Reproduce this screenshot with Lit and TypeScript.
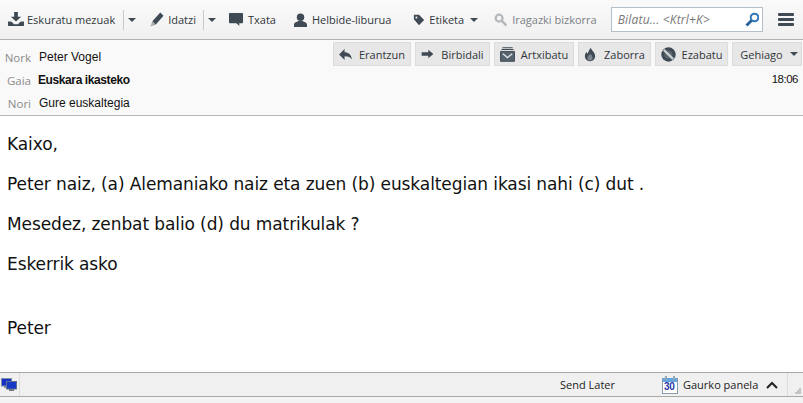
import { LitElement, html, css, svg } from "lit";
import { customElement } from "lit/decorators.js";

const ic = (w: number, h: number, body: unknown, vb = `0 0 ${w} ${h}`) =>
  html`<svg class="ic" width=${w} height=${h} viewBox=${vb}>${body}</svg>`;
const D = "#3f4a54";

const icons = {
  get: ic(16, 15, svg`<path d="M6.500 0h4v5h3.500L8.500 10 3 5h3.500z" fill="${D}"/><path d="M0 10h3.500l3 3h4l3-3H17v5H0z" fill="${D}"/>`, "0 0 17 16"),
  pen: ic(14, 15, svg`<path d="M11 .5l3.500 3.500L6 13.500 2.500 10z" fill="${D}"/><path d="M2.500 10l3.500 3.500L.5 15.500z" fill="#a4abb0"/>`, "0 0 15 16"),
  chat: ic(16, 15, svg`<path d="M2 1h13a1 1 0 0 1 1 1v9a1 1 0 0 1-1 1h-3v3l-3-3H2a1 1 0 0 1-1-1V2a1 1 0 0 1 1-1z" fill="${D}"/>`, "0 0 17 16"),
  person: ic(13, 14, svg`<circle cx="7" cy="4.500" r="4" fill="${D}"/><path d="M0 15v-2.500C0 10 3 9.500 5 8.500h4c2 1 5 1.500 5 4V15z" fill="${D}"/>`, "0 0 14 15"),
  tag: ic(12, 12, svg`<path d="M1 1h6l6 6-6 6-6-7z" fill="${D}"/><circle cx="4" cy="4" r="1.200" fill="#f3f3f3"/>`, "0 0 14 14"),
  lens: ic(13, 14, svg`<circle cx="5.500" cy="5.500" r="3.700" fill="none" stroke="#b4b9bd" stroke-width="2.400"/><path d="M8.500 8.500l5 5" stroke="#b4b9bd" stroke-width="2.800"/>`, "0 0 14 15"),
  search: ic(14, 15, svg`<circle cx="9.500" cy="5.500" r="3.800" fill="none" stroke="#2f78b8" stroke-width="2"/><path d="M6.500 8.500l-5 5" stroke="#24609a" stroke-width="2.800"/>`),
  reply: ic(13, 11, svg`<path d="M6 0v3.500c4 0 7.500 2.500 8 8-1.500-2.500-4-3.500-8-3.500v4L0 6z" fill="${D}"/>`, "0 0 14 12"),
  fwd: ic(13, 10, svg`<path d="M8 1l6 5-6 5V8H0V4h8z" fill="${D}"/>`, "0 0 14 12"),
  arch: ic(15, 15, svg`<path d="M2.500 0h11v1h-11zM1.500 2h13v1h-13z" fill="${D}"/><path d="M0.500 4.500h15V15H.5z" fill="#56626c" stroke="${D}"/><path d="M3 7l5 4 5-4" fill="none" stroke="#dfe3e6" stroke-width="1.500"/>`, "0 0 16 15.500"),
  junk: ic(12, 15, svg`<path d="M8 0c.5 3 5 5 5 10a6 6 0 0 1-12 0c0-2 1-4 2-5 .5 1 1 1.500 1.500 2C5 5 6 2 8 0z" fill="${D}"/><path d="M7.500 7c1 1.500 2.500 2.500 2.500 5a3 3 0 0 1-6 0c0-2 2-3 3.500-5z" fill="#7b858d"/>`, "0 0 14 16"),
  del: ic(15, 15, svg`<circle cx="8" cy="8" r="7.700" fill="${D}"/><circle cx="8" cy="8" r="4.300" fill="#59646d"/><path d="M3 3l10 10" stroke="#c9cdd0" stroke-width="2.600"/>`, "0 0 16 16"),
  net: ic(16, 14, svg`<rect x="0.500" y="0.500" width="10" height="7.500" fill="#1a2fc4" stroke="#7d8fa8"/><path d="M3 8h5v2H3z" fill="#8a93a0"/><rect x="5.500" y="3.500" width="10" height="7.500" fill="#1838c8" stroke="#5f7390"/><path d="M8 11h5v2H8z" fill="#6e7885"/>`),
  cal: ic(16, 19, svg`<rect x="0.500" y="3.500" width="15" height="15" fill="#fff" stroke="#8a9cb0"/><rect x="1" y="3" width="14" height="4" fill="#63a4dc"/><rect x="3" y="1" width="2" height="4" fill="#9aa7b3"/><rect x="11" y="1" width="2" height="4" fill="#9aa7b3"/>`),
};

@customElement("app-root")
export class AppRoot extends LitElement {
  static styles = css`
    :host { display: block; width: 803px; height: 403px; overflow: hidden; background: #fff; }
    .ic { display: block; flex: none; }
    .toolbar {
      height: 40px; box-sizing: border-box; border-bottom: 1px solid #aeb0b2;
      background: linear-gradient(#fafafa, #f0f0f0);
      display: flex; align-items: center; padding: 0 0 0 8px;
      font: 11px "Open Sans", sans-serif; color: #30363b;
    }
    .tb { display: flex; align-items: center; gap: 4px; white-space: nowrap; }
    .t0 { gap: 3px; }
    .sep { width: 1px; height: 20px; background: #c9c9c9; margin: 0 4px 0 7px; }
    .s0 { margin-left: 8px; }
    .arr { width: 0; height: 0; border: 4px solid transparent; border-top: 4.500px solid #3f4a54; border-bottom: 0; flex: none; }
    .m1 { margin-left: 14px; } .m2 { margin-left: 12px; } .m3 { margin-left: 18px; gap: 5px; }
    .m4 { margin-left: 22px; } .m5 { margin-left: 16px; gap: 5px; }
    .etk { margin-left: 2px; }
    .dim { color: #7a7f84; }
    .search {
      margin-left: 14px; width: 152px; height: 25px; box-sizing: border-box; background: #fff;
      border: 1px solid #b4bfca; display: flex; align-items: center; justify-content: space-between;
      padding: 0 3px 0 6px; font: italic 12px "Open Sans", sans-serif; letter-spacing: 0.2px; color: #777;
    }
    .menu { margin-left: 15px; width: 16px; display: flex; flex-direction: column; gap: 2px; }
    .menu i { display: block; height: 3px; border-radius: 1px; background: #3f4a54; }
    .head {
      height: 76px; box-sizing: border-box; background: #f9f9f9; border-bottom: 1px solid #b4b8bd;
      display: grid; grid-template-columns: 1fr auto; font: 12px "Liberation Sans", sans-serif; color: #111;
    }
    .fields { display: grid; grid-template-columns: 31px 1fr; grid-auto-rows: 23px; column-gap: 8px; padding-top: 5px; align-items: center; }
    .lab { text-align: right; color: #8c8c8c; font: 11.500px "Open Sans", sans-serif; padding-top: 1px; }
    .b { font-weight: 700; letter-spacing: -0.4px; margin-left: -1px; }
    .right { display: flex; flex-direction: column; align-items: flex-end; padding: 2px 1px 0 0; }
    .btns { display: flex; gap: 4px; }
    .btn {
      height: 24px; box-sizing: border-box; background: #e7e7e7; border: 1px solid #dcdcdc;
      display: flex; align-items: center; gap: 7px; font: 11px "Open Sans", sans-serif; color: #30363b;
      justify-content: center;
    }
    .more { padding-left: 4px; }
    .bg6 { gap: 6px; }
    .bg8 { gap: 8px; }
    .time { font: 11.500px "Liberation Sans", sans-serif; letter-spacing: -0.5px; margin: 7px 4px 0 0; }
    .body { height: 256px; box-sizing: border-box; padding: 18px 0 0 7px; font: 17px "DejaVu Sans", sans-serif; color: #111; letter-spacing: -0.1px; }
    .body p { margin: 0 0 19px; line-height: 21px; }
    .body .last { margin-top: 43px; }
    .status {
      height: 25px; box-sizing: border-box; border-top: 1px solid #a8a8a8; border-bottom: 1px solid #a8a8a8;
      background: #f0f0f0; display: flex; align-items: center; font: 11px "Open Sans", sans-serif; color: #222;
    }
    .net { width: 20px; height: 100%; box-sizing: border-box; border-right: 1px solid #dcdcdc; display: flex; align-items: center; padding-left: 1px; }
    .send { margin-left: 540px; width: 102px; }
    .today { display: flex; align-items: center; gap: 5px; position: relative; width: 125px; border-right: 1px solid #dcdcdc; height: 100%; }
    .calnum { position: absolute; left: 2px; top: 8px; font: 700 10px "Liberation Sans", sans-serif; color: #2838a8; letter-spacing: -0.3px; }
    .chev { margin-left: 3px; }
    .grip { flex: 1; align-self: stretch; display: grid; grid-template-columns: repeat(3, 2px); grid-auto-rows: 2px; align-content: end; justify-content: end; padding: 0 2px 2px 0; }
    .grip i { background: #c4c4c4; }
    .foot { height: 6px; background: #f3f3f3; }
  `;

  render() {
    const btn = (label: string, w: number, icon: unknown, cls = "") =>
      html`<div class="btn ${cls}" style="width:${w}px">${icon}<span>${label}</span></div>`;
    return html`
      <div class="toolbar">
        <div class="tb t0">${icons.get}<span>Eskuratu mezuak</span></div>
        <div class="sep s0"></div><div class="arr"></div>
        <div class="tb m1">${icons.pen}<span>Idatzi</span></div>
        <div class="sep"></div><div class="arr"></div>
        <div class="tb m2">${icons.chat}<span>Txata</span></div>
        <div class="tb m3">${icons.person}<span>Helbide-liburua</span></div>
        <div class="tb m4">${icons.tag}<span>Etiketa</span><div class="arr etk"></div></div>
        <div class="tb m5 dim">${icons.lens}<span>Iragazki bizkorra</span></div>
        <div class="search"><span>Bilatu... &lt;Ktrl+K&gt;</span>${icons.search}</div>
        <div class="menu"><i></i><i></i><i></i></div>
      </div>
      <div class="head">
        <div class="fields">
          <div class="lab">Nork</div><div>Peter Vogel</div>
          <div class="lab">Gaia</div><div class="b">Euskara ikasteko</div>
          <div class="lab">Nori</div><div>Gure euskaltegia</div>
        </div>
        <div class="right">
          <div class="btns">
            ${btn("Erantzun", 78, icons.reply)}
            ${btn("Birbidali", 75, icons.fwd)}
            ${btn("Artxibatu", 80, icons.arch, "bg6")}
            ${btn("Zaborra", 73, icons.junk, "bg8")}
            ${btn("Ezabatu", 73, icons.del, "bg6")}
            <div class="btn more" style="width:70px">Gehiago<div class="arr"></div></div>
          </div>
          <div class="time">18:06</div>
        </div>
      </div>
      <div class="body">
        <p>Kaixo,</p>
        <p>Peter naiz, (a) Alemaniako naiz eta zuen (b) euskaltegian ikasi nahi (c) dut .</p>
        <p>Mesedez, zenbat balio (d) du matrikulak ?</p>
        <p>Eskerrik asko</p>
        <p class="last">Peter</p>
      </div>
      <div class="status">
        <div class="net">${icons.net}</div>
        <div class="send">Send Later</div>
        <div class="today">${icons.cal}<span class="calnum">30</span><span>Gaurko panela</span>
          <svg class="ic chev" width="12" height="8" viewBox="0 0 12 8"><path d="M1 7l5-5 5 5" fill="none" stroke="#222" stroke-width="2"/></svg>
        </div>
        <div class="grip"><i style="grid-column:3"></i><i style="grid-column:2"></i><i style="grid-column:3"></i><i style="grid-column:1"></i><i></i><i></i></div>
      </div>
      <div class="foot"></div>
    `;
  }
}
